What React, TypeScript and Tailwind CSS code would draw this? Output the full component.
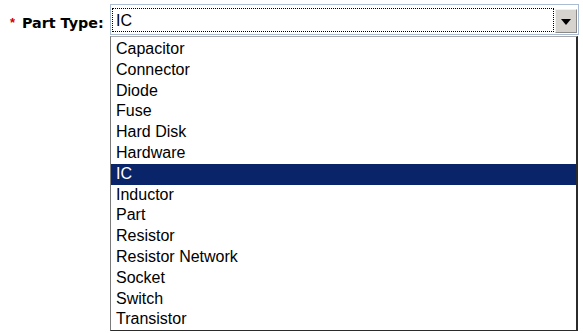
import React from 'react';

const partTypes = [
  'Capacitor',
  'Connector',
  'Diode',
  'Fuse',
  'Hard Disk',
  'Hardware',
  'IC',
  'Inductor',
  'Part',
  'Resistor',
  'Resistor Network',
  'Socket',
  'Switch',
  'Transistor',
];

export default function App() {
  const selected = 'IC';

  return (
    <div className="w-[583px] h-[333px] bg-white overflow-hidden font-['Liberation_Sans',Arial,sans-serif] text-black">
      <div className="flex pt-[4px]">
        {/* label */}
        <div className="w-[110px] shrink-0 pl-[10px] flex items-start">
          <span className="text-[#cc0000] text-[13px] leading-none mt-[12px] w-[12px] font-bold">*</span>
          <span className="font-['DejaVu_Sans',Verdana,sans-serif] font-bold text-[14.3px] leading-none mt-[12px]">
            Part Type:
          </span>
        </div>

        {/* select + open list */}
        <div className="w-[469px] shrink-0 flex flex-col">
          <div className="h-[31px] border border-[#a9bcd3] flex items-start pl-[1px] pr-[1px]">
            <div className="flex-1 h-[24px] mt-[3px] border border-dotted border-black flex items-center pl-[3px] text-[16px] leading-none">
              <span className="mt-[2px]">{selected}</span>
            </div>
            <div className="w-[22px] h-[24px] mt-[4px] ml-[1px] bg-[#d6d3ce] border border-t-[#f0f0f0] border-l-[#f0f0f0] border-r-[#8a8a8a] border-b-[#8a8a8a] flex items-center justify-center">
              <svg width="10" height="6" viewBox="0 0 10 6" className="mt-[1px]">
                <polygon points="0,0 10,0 5,6" fill="#000" />
              </svg>
            </div>
          </div>

          <ul className="w-[468px] mt-[1px] border border-t-[#a7a7a7] border-l-[#7a7a7a] border-r-[#2b2b2b] border-b-[#2b2b2b] border-r-2 pt-[2px]">
            {partTypes.map((p) => (
              <li
                key={p}
                className={
                  p === selected
                    ? 'h-[20.8px] leading-[20.8px] pl-[5px] text-[16px] bg-[#0a246a] text-white'
                    : 'h-[20.8px] leading-[20.8px] pl-[5px] text-[16px]'
                }
              >
                {p}
              </li>
            ))}
          </ul>
        </div>
      </div>
    </div>
  );
}
